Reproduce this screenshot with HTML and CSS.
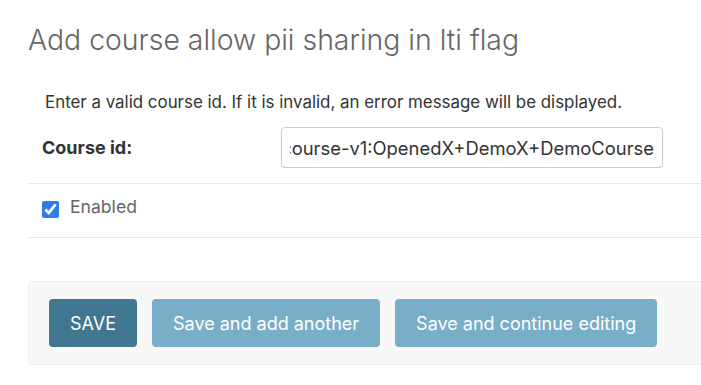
FILE: index.html
```html
<!DOCTYPE html>
<html lang="en">
<head>
    <meta charset="UTF-8">
    <meta name="viewport" content="width=device-width, initial-scale=1.0">
    <title>Add course allow pii sharing in lti flag</title>
    <link rel="stylesheet" href="styles.css">
</head>
<body>
    <div class="content">
        <h1>Add course allow pii sharing in lti flag</h1>
        <form class="change-form">
            <fieldset class="module">
                <div class="description">Enter a valid course id. If it is invalid, an error message will be displayed.</div>
                <div class="form-row">
                    <label class="required" for="id_course_id">Course id:</label>
                    <div class="text-field" id="id_course_id">
                        <div class="text-scroll"><span>course-v1:OpenedX+DemoX+DemoCourse</span></div>
                    </div>
                </div>
                <div class="form-row checkbox-row">
                    <input type="checkbox" id="id_enabled" checked>
                    <label for="id_enabled">Enabled</label>
                </div>
            </fieldset>
            <div class="submit-row">
                <button type="button" class="btn default">SAVE</button>
                <button type="button" class="btn">Save and add another</button>
                <button type="button" class="btn">Save and continue editing</button>
            </div>
        </form>
    </div>
</body>
</html>
```

FILE: styles.css
```css
body {
    margin: 0;
    font-family: Inter, "Noto Sans", sans-serif;
    color: #333;
    background: #fff;
}
.content {
    padding-left: 28px;
}
h1 {
    margin: 0;
    padding: 23px 0 0 0;
    font-size: 28.4px;
    font-weight: 300;
    line-height: 34px;
    color: #666;
}
.change-form {
    margin-top: 35px;
}
.module {
    margin: 0;
    padding: 0;
    border: none;
}
.description {
    padding-left: 17px;
    font-size: 16.9px;
    line-height: 20px;
}
.form-row {
    display: flex;
    align-items: center;
    padding: 15px 0 15px 14px;
    border-bottom: 1px solid #e8e8e8;
}
.form-row label.required {
    width: 239px;
    font-size: 18px;
    font-weight: 700;
}
.text-field {
    display: flex;
    box-sizing: border-box;
    width: 382px;
    height: 41px;
    padding: 0 8px;
    border: 1px solid #ccc;
    border-radius: 4px;
}
.text-scroll {
    display: flex;
    flex: 1;
    justify-content: flex-end;
    align-items: center;
    overflow: hidden;
    white-space: nowrap;
    font-size: 18.4px;
    color: #333;
}
.checkbox-row {
    box-sizing: border-box;
    height: 54px;
    padding: 13px 0 0 14px;
    align-items: flex-start;
}
.checkbox-row input {
    width: 17px;
    height: 17px;
    margin: 4px 0 0 0;
    accent-color: #2b7de9;
}
.checkbox-row label {
    margin-left: 11px;
    font-size: 17.6px;
    line-height: 20px;
    color: #666;
}
.submit-row {
    display: flex;
    gap: 15px;
    margin-top: 43px;
    padding: 17px 20px;
    background: #f8f8f8;
    border: 1px solid #eee;
    border-right: none;
    border-radius: 4px 0 0 4px;
}
.btn {
    height: 48px;
    padding: 0 21px;
    border: none;
    border-radius: 4px;
    background: #79aec8;
    color: #fff;
    font-family: Inter, "Noto Sans", sans-serif;
    font-size: 18px;
}
.btn.default {
    background: #417690;
}
```
